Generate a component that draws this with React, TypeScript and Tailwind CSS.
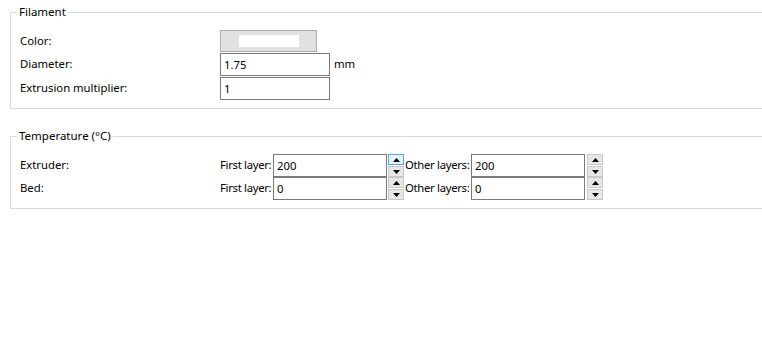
import React from "react";

const font = { fontFamily: '"Segoe UI", "Noto Sans", "Open Sans", sans-serif' };

function SpinButton({ up, hover }: { up?: boolean; hover?: boolean }) {
  return (
    <div
      className={
        "flex h-[11px] w-[16px] items-center justify-center border " +
        (hover ? "border-[#5ea2de] bg-[#e5f1fb]" : "border-[#c8c8c8] bg-[#e6e6e6]")
      }
    >
      <svg width="7" height="4" viewBox="0 0 7 4">
        {up ? <polygon points="0,4 7,4 3.5,0" fill="#000" /> : <polygon points="0,0 7,0 3.5,4" fill="#000" />}
      </svg>
    </div>
  );
}

function Spin({ hoverUp }: { hoverUp?: boolean }) {
  return (
    <div className="flex h-[23px] flex-col justify-between">
      <SpinButton up hover={hoverUp} />
      <SpinButton />
    </div>
  );
}

function TextBox({ value, w }: { value: string; w: string }) {
  return (
    <div className={"flex h-[23px] shrink-0 items-center border border-[#7a7a7a] bg-white pl-[3px] " + w}>
      <span className="leading-none">{value}</span>
    </div>
  );
}

export default function App() {
  return (
    <div className="h-[352px] w-[762px] overflow-hidden bg-white text-[11.3px] text-black" style={font}>
      <fieldset className="ml-[10px] mt-[4px] border border-r-0 border-[#dcdcdc] pb-[8px] pl-[9px] pt-[10px]">
        <legend className="ml-[-3px] px-[2px] text-[11.5px] leading-[16px]">Filament</legend>
        <div className="flex flex-col gap-[1px]">
          <div className="flex h-[22px] items-center">
            <div className="w-[200px]">Color:</div>
            <div className="flex h-[22px] w-[97px] items-center justify-center border border-[#adadad] bg-[#e1e1e1]">
              <div className="h-[12px] w-[60px] bg-white" />
            </div>
          </div>
          <div className="flex h-[23px] items-center">
            <div className="w-[200px]">Diameter:</div>
            <TextBox value="1.75" w="w-[110px]" />
            <span className="ml-[4px]">mm</span>
          </div>
          <div className="flex h-[23px] items-center">
            <div className="w-[200px]">Extrusion multiplier:</div>
            <TextBox value="1" w="w-[110px]" />
          </div>
        </div>
      </fieldset>

      <fieldset className="ml-[10px] mt-[19px] border border-r-0 border-[#dcdcdc] pb-[8px] pl-[9px] pt-[10px]">
        <legend className="ml-[-3px] px-[2px] text-[11.5px] leading-[16px]">Temperature (°C)</legend>
        <div className="flex flex-col">
          {[
            { label: "Extruder:", first: "200", other: "200", hover: true },
            { label: "Bed:", first: "0", other: "0", hover: false },
          ].map((r) => (
            <div key={r.label} className="flex h-[23px] items-center">
              <div className="w-[200px] shrink-0">{r.label}</div>
              <span className="w-[53px] shrink-0 whitespace-nowrap tracking-[-0.3px]">First layer:</span>
              <TextBox value={r.first} w="w-[114px]" />
              <div className="ml-[1px] shrink-0">
                <Spin hoverUp={r.hover} />
              </div>
              <span className="ml-[1px] w-[66px] shrink-0 whitespace-nowrap tracking-[-0.3px]">Other layers:</span>
              <TextBox value={r.other} w="w-[114px]" />
              <div className="ml-[2px] shrink-0">
                <Spin />
              </div>
            </div>
          ))}
        </div>
      </fieldset>
    </div>
  );
}
